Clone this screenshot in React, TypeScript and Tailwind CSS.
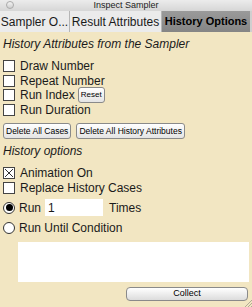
import React from 'react';

const Check = ({ checked, label }: { checked?: boolean; label: string }) => (
  <div className="flex h-[14.5px] items-center gap-[5px]">
    <span className="flex h-[12px] w-[12px] shrink-0 items-center justify-center border border-[#444] bg-white">
      {checked && (
        <svg width="10" height="10" viewBox="0 0 10 10">
          <path d="M1 1L9 9M9 1L1 9" stroke="#333" strokeWidth="1" />
        </svg>
      )}
    </span>
    <span className="whitespace-nowrap">{label}</span>
  </div>
);

const Radio = ({ on }: { on?: boolean }) => (
  <span className="flex h-[12px] w-[12px] shrink-0 items-center justify-center rounded-full border border-[#333] bg-white">
    {on && <span className="h-[7px] w-[7px] rounded-full bg-black" />}
  </span>
);

const Btn = ({ children, className = '' }: { children: React.ReactNode; className?: string }) => (
  <button
    className={`h-[16px] whitespace-nowrap rounded-[3px] border border-[#8a8a8a] bg-gradient-to-b from-white to-[#e4e4e4] px-[2px] text-[8.5px] leading-none text-black ${className}`}
  >
    {children}
  </button>
);

export default function App() {
  return (
    <div
      className="relative flex h-[307px] w-[252px] flex-col overflow-hidden bg-[#f2e6c2] text-[12px] text-[#1a1a1a]"
      style={{ fontFamily: '"Liberation Sans", Arial, sans-serif' }}
    >
      {/* title bar */}
      <div className="relative flex h-[11px] items-center justify-center bg-gradient-to-b from-[#ececec] to-[#d6d6d6] text-[9px] text-[#222]">
        <span className="absolute left-[6px] top-[1px] h-[8px] w-[8px] rounded-full border border-[#aaa] bg-gradient-to-b from-[#f4f4f4] to-[#cfcfcf]" />
        Inspect Sampler
      </div>

      {/* tabs */}
      <div className="flex h-[21px] items-stretch bg-[#e4e4e4] text-[12px] whitespace-nowrap">
        <div className="flex w-[70px] items-center justify-center border-r border-[#b5b5b5] bg-[#ebebeb]">Sampler O...</div>
        <div className="flex w-[92px] items-center justify-center border-r border-[#b5b5b5] bg-[#ebebeb]">Result Attributes</div>
        <div className="flex w-[88px] items-center justify-center bg-gradient-to-b from-[#9a9a9a] to-[#858585] text-[11px] font-bold text-black">
          History Options
        </div>
        <div className="flex-1 bg-[#cfcfcf]" />
      </div>

      {/* content */}
      <div className="flex flex-1 flex-col px-[3px] pt-[3px]">
        <div className="italic">History Attributes from the Sampler</div>
        <div className="mt-[6px] flex flex-col">
          <Check label="Draw Number" />
          <Check label="Repeat Number" />
          <div className="flex h-[14.5px] items-center gap-[3px]">
            <Check label="Run Index" />
            <Btn className="h-[14px] text-[8px]">Reset</Btn>
          </div>
          <Check label="Run Duration" />
        </div>
        <div className="mt-[6px] flex gap-[5px]">
          <Btn>Delete All Cases</Btn>
          <Btn>Delete All History Attributes</Btn>
        </div>
        <div className="mt-[3px] italic">History options</div>
        <div className="mt-[6px] flex flex-col">
          <Check checked label="Animation On" />
          <Check label="Replace History Cases" />
        </div>
        <div className="mt-[4px] flex h-[17px] items-center gap-[4px]">
          <Radio on />
          <span>Run</span>
          <span className="flex h-[17px] w-[58px] items-center bg-white pl-[3px]">1</span>
          <span className="ml-[2px]">Times</span>
        </div>
        <div className="mt-[2.5px] flex items-center gap-[4px]">
          <Radio />
          <span>Run Until Condition</span>
        </div>
        <div className="ml-[15px] mt-[5px] h-[40px] shrink-0 bg-white" />
        <div className="mt-[5px] flex justify-end pr-[1px]">
          <button className="h-[14px] w-[122px] rounded-[4px] border border-[#8a8a8a] bg-gradient-to-b from-white to-[#dcdcdc] text-[9px] leading-none text-black">
            Collect
          </button>
        </div>
      </div>

      {/* resize grip */}
      <svg className="absolute bottom-0 right-0" width="8" height="8" viewBox="0 0 8 8">
        <path d="M1 8L8 1M4 8L8 4M7 8L8 7" stroke="#a09a8a" strokeWidth="0.8" />
      </svg>
    </div>
  );
}
